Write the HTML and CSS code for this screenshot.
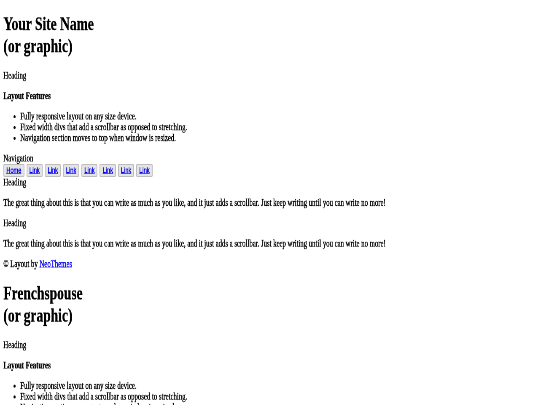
FILE: index.html
```html
<!DOCTYPE html>
<html>
<head>
<meta charset="utf-8">
<title>Your Site Name</title>
<link rel="stylesheet" href="styles.css">
</head>
<body>
<div class="page">
  <div class="site">
    <h1 class="site-title">Your Site Name<br>(or graphic)</h1>
    <p>Heading</p>
    <p><strong>Layout Features</strong></p>
    <ul>
      <li>Fully responsive layout on any size device.</li>
      <li>Fixed width divs that add a scrollbar as opposed to stretching.</li>
      <li>Navigation section moves to top when window is resized.</li>
    </ul>
    <div class="nav">
      <div>Navigation</div>
      <div class="nav-links">
        <button class="nav-btn"><a href="#">Home</a></button>
        <button class="nav-btn"><a href="#">Link</a></button>
        <button class="nav-btn"><a href="#">Link</a></button>
        <button class="nav-btn"><a href="#">Link</a></button>
        <button class="nav-btn"><a href="#">Link</a></button>
        <button class="nav-btn"><a href="#">Link</a></button>
        <button class="nav-btn"><a href="#">Link</a></button>
        <button class="nav-btn"><a href="#">Link</a></button>
      </div>
    </div>
    <div>Heading</div>
    <p>The great thing about this is that you can write as much as you like, and it just adds a scrollbar. Just keep writing until you can write no more!</p>
    <p>Heading</p>
    <p>The great thing about this is that you can write as much as you like, and it just adds a scrollbar. Just keep writing until you can write no more!</p>
    <p>&copy; Layout by <a href="#">NeoThemes</a></p>
  </div>
  <div class="site">
    <h1 class="site-title">Frenchspouse<br>(or graphic)</h1>
    <p>Heading</p>
    <p><strong>Layout Features</strong></p>
    <ul>
      <li>Fully responsive layout on any size device.</li>
      <li>Fixed width divs that add a scrollbar as opposed to stretching.</li>
      <li>Navigation section moves to top when window is resized.</li>
    </ul>
  </div>
</div>
</body>
</html>
```

FILE: styles.css
```css
html {
  overflow: hidden;
}

body {
  margin: 0;
  font-family: "Liberation Serif", serif;
  font-size: 16px;
  color: #000;
  background: #fff;
}

/* the whole document is drawn squeezed into the small window */
.page {
  display: flow-root;
  width: 1264px;
  padding: 0 8px;
  transform: scale(0.4216, 0.6);
  transform-origin: 0 0;
  will-change: transform;
  -webkit-text-stroke: 0.5px currentColor;
}

.site-title {
  font-size: 2em;
  margin: 0.67em 0;
}

.nav-links {
  display: flex;
  gap: 5px;
}

.nav-btn {
  font-family: "Liberation Sans", sans-serif;
  font-size: 13.33px;
  line-height: 16px;
  padding: 1px 5px;
  margin: 0;
  background: #e4e4e4;
  border: 2px solid #bdbdbd;
  border-radius: 3px;
}

a {
  color: #0000ee;
}
```
